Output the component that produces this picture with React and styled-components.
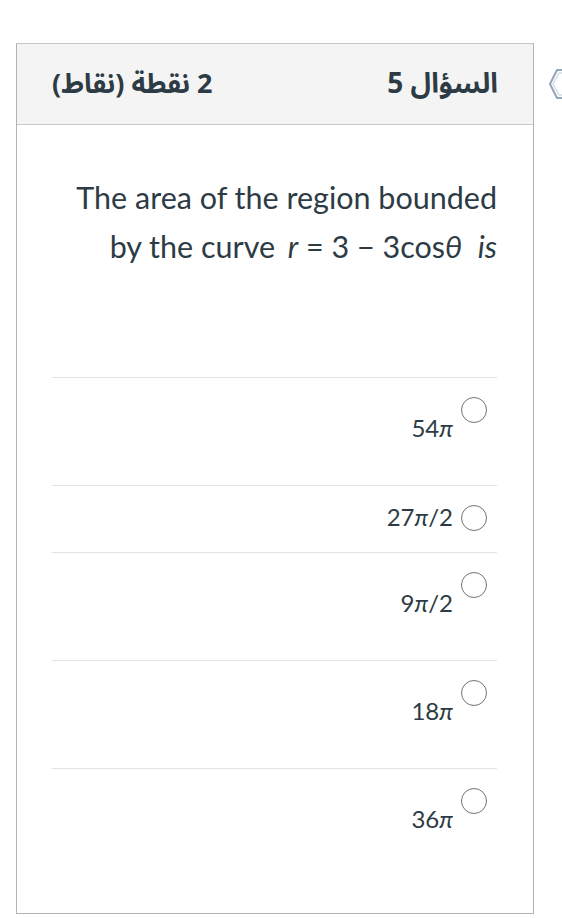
import React from 'react';
import styled, { createGlobalStyle } from 'styled-components';

const GlobalStyle = createGlobalStyle`
  html, body {
    margin: 0;
    padding: 0;
    background: #ffffff;
    overflow: hidden;
  }
  body {
    font-family: Lato, "Noto Sans", "DejaVu Sans", sans-serif;
    color: #2d3b45;
  }
`;

const options = [
  { id: 1, value: '54', suffix: '', tall: true },
  { id: 2, value: '27', suffix: '/2', tall: false },
  { id: 3, value: '9', suffix: '/2', tall: true },
  { id: 4, value: '18', suffix: '', tall: true },
  { id: 5, value: '36', suffix: '', tall: true },
];

const App = () => {
  return (
    <>
      <GlobalStyle />
      <Page>
        <Card dir="rtl">
          <Header>
            <HeaderTitle>السؤال 5</HeaderTitle>
            <HeaderPoints>2 نقطة (نقاط)</HeaderPoints>
          </Header>
          <Body>
            <QuestionText dir="ltr">
              The area of the region bounded
              <br />
              by the curve <MathVar $gap>r</MathVar> = 3 − 3cos<MathVar>θ</MathVar>&nbsp; <MathVar>is</MathVar>
            </QuestionText>
            <OptionList>
              {options.map((opt) => (
                <OptionRow key={opt.id}>
                  <Radio />
                  <OptionLabel $tall={opt.tall} dir="ltr">
                    {opt.value}
                    <Pi>π</Pi>
                    {opt.suffix}
                  </OptionLabel>
                </OptionRow>
              ))}
            </OptionList>
          </Body>
        </Card>
        <FlagButton>
          <svg width="22" height="32" viewBox="0 0 22 32">
            <path
              d="M21 2 L9 2 L2 16 L9 30 L21 30"
              fill="none"
              stroke="#94a6b8"
              strokeWidth="2"
              strokeLinejoin="round"
            />
            <path
              d="M21 5 L11 5 L5 16 L11 27 L21 27"
              fill="none"
              stroke="#d3dce4"
              strokeWidth="1.5"
              strokeLinejoin="round"
            />
          </svg>
        </FlagButton>
      </Page>
    </>
  );
};

export default App;

const Page = styled.div`
  display: flex;
  align-items: flex-start;
  gap: 14px;
  padding: 43px 0 0 16px;
`;

const Card = styled.div`
  width: 518px;
  height: 871px;
  box-sizing: border-box;
  border: 1px solid #b3b3b3;
  border-top-color: #c6c6c6;
  background: #ffffff;
  display: flex;
  flex-direction: column;
  flex-shrink: 0;
`;

const Header = styled.div`
  height: 81px;
  box-sizing: border-box;
  background: #f4f4f4;
  border-bottom: 1px solid #c8c8c8;
  display: flex;
  align-items: center;
  justify-content: space-between;
  padding: 0 35px;
  font-family: "Noto Sans Arabic", "Noto Naskh Arabic", "DejaVu Sans", sans-serif;
  color: #2d3b45;
`;

const HeaderTitle = styled.h2`
  margin: 0;
  font-size: 28px;
  font-weight: 700;
`;

const HeaderPoints = styled.span`
  font-size: 27px;
  font-weight: 700;
`;

const Body = styled.div`
  padding: 48px 36px 0 35px;
`;

const QuestionText = styled.p`
  margin: 0;
  font-size: 30.5px;
  line-height: 49px;
  text-align: right;
  color: #2d3b45;
`;

const MathVar = styled.i`
  font-style: italic;
  margin-left: ${(props) => (props.$gap ? '5px' : '0')};
`;

const OptionList = styled.div`
  margin-top: 106px;
`;

const OptionRow = styled.div`
  display: flex;
  align-items: flex-start;
  gap: 8px;
  border-top: 1px solid #e2e2e2;
  padding: 16px 10px 20px 0;
`;

const Radio = styled.span`
  width: 26px;
  height: 26px;
  box-sizing: border-box;
  border: 1.5px solid #737373;
  border-radius: 50%;
  margin-top: 3px;
  flex-shrink: 0;
  background: #ffffff;
`;

const OptionLabel = styled.span`
  font-size: 24px;
  line-height: 30px;
  padding: ${(props) => (props.$tall ? '19px 0 22px' : '0')};
  color: #2d3b45;
`;

const Pi = styled.i`
  font-style: italic;
`;

const FlagButton = styled.div`
  margin-top: 25px;
  flex-shrink: 0;
  display: flex;
`;
